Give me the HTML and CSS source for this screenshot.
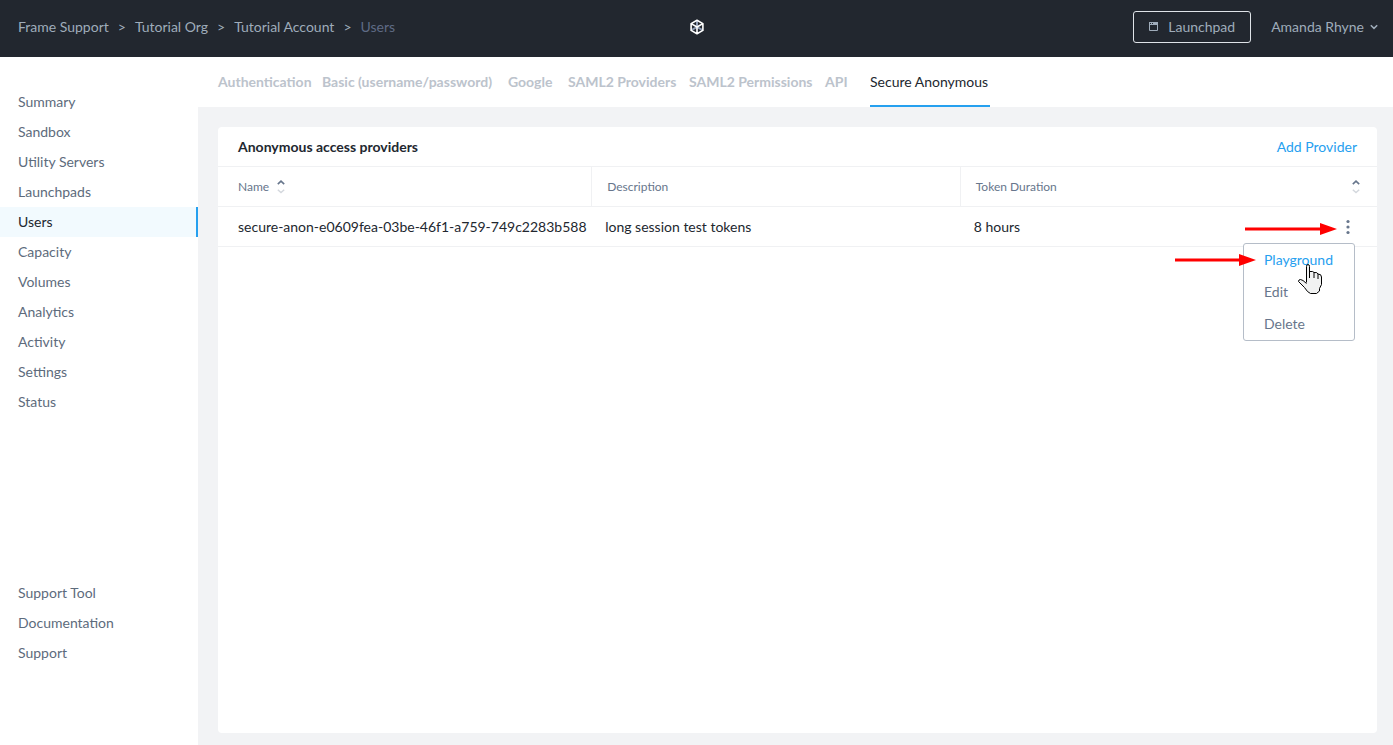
FILE: index.html
```html
<!DOCTYPE html>
<html lang="en">
<head>
<meta charset="utf-8">
<title>Users - Secure Anonymous</title>
<link rel="stylesheet" href="styles.css">
</head>
<body>
<header class="topbar">
  <nav class="crumbs" aria-label="Breadcrumb">
    <a href="#">Frame Support</a><span>&gt;</span>
    <a href="#">Tutorial Org</a><span>&gt;</span>
    <a href="#">Tutorial Account</a><span>&gt;</span>
    <span class="crumb-current" aria-current="page">Users</span>
  </nav>
  <svg class="logo" viewBox="0 0 16 16" width="16" height="16" aria-hidden="true">
    <path d="M8 8V1.5M8 8l-5.5 3.2M8 8l5.5 3.2" stroke="#8e9bb3" stroke-width="2" fill="none"/>
    <path d="M8 1.2 13.9 4.6V11.4L8 14.8 2.1 11.4V4.6ZM2.1 4.6 8 8l5.9-3.4M8 8v6.8" stroke="#fff" stroke-width="1.6" stroke-linejoin="round" fill="none"/>
  </svg>
  <div class="account">
    <button class="launchpad" type="button">
      <svg viewBox="0 0 10 10" width="10" height="10" aria-hidden="true"><path d="M.5.5h8v8h-8z" fill="none" stroke="#9facba"/><path d="M0 0h9v3H0z" fill="#9facba"/><path d="M1 1h1v1H1zM3 1h1v1H3z" fill="#22272f"/></svg>
      Launchpad
    </button>
    <button class="user" type="button">Amanda Rhyne
      <svg viewBox="0 0 8 6" width="8" height="6" aria-hidden="true"><path d="M.8 1.2 4 4.4 7.2 1.2" fill="none" stroke="#9facba" stroke-width="1.5"/></svg>
    </button>
  </div>
</header>
<div class="shell">
  <aside class="sidebar">
    <nav class="side-nav" aria-label="Account">
      <a href="#">Summary</a>
      <a href="#">Sandbox</a>
      <a href="#">Utility Servers</a>
      <a href="#">Launchpads</a>
      <a href="#" class="active" aria-current="page">Users</a>
      <a href="#">Capacity</a>
      <a href="#">Volumes</a>
      <a href="#">Analytics</a>
      <a href="#">Activity</a>
      <a href="#">Settings</a>
      <a href="#">Status</a>
    </nav>
    <nav class="side-nav" aria-label="Help">
      <a href="#">Support Tool</a>
      <a href="#">Documentation</a>
      <a href="#">Support</a>
    </nav>
  </aside>
  <main class="main">
    <nav class="tabs" aria-label="User settings">
      <a href="#">Authentication</a>
      <a href="#">Basic (username/password)</a>
      <a href="#">Google</a>
      <a href="#">SAML2 Providers</a>
      <a href="#">SAML2 Permissions</a>
      <a href="#">API</a>
      <a href="#" class="active" aria-current="page">Secure Anonymous</a>
    </nav>
    <section class="card">
      <div class="card-head">
        <h1>Anonymous access providers</h1>
        <button class="add" type="button">Add Provider</button>
      </div>
      <table class="providers">
        <thead>
          <tr>
            <th scope="col"><div class="cell">Name
              <svg class="sort" viewBox="0 0 8 14" width="8" height="14" aria-hidden="true"><path d="M.8 4.2 4 1.2 7.2 4.2" fill="none" stroke="#67768c" stroke-width="1.6"/><path d="M.8 9.8 4 12.6 7.2 9.8" fill="none" stroke="#d3d7dd" stroke-width="1.4"/></svg></div></th>
            <th scope="col">Description</th>
            <th scope="col"><div class="cell spread">Token Duration
              <svg class="sort" viewBox="0 0 8 14" width="8" height="14" aria-hidden="true"><path d="M.8 4.2 4 1.2 7.2 4.2" fill="none" stroke="#67768c" stroke-width="1.6"/><path d="M.8 9.8 4 12.6 7.2 9.8" fill="none" stroke="#d3d7dd" stroke-width="1.4"/></svg></div></th>
          </tr>
        </thead>
        <tbody>
          <tr>
            <td>secure-anon-e0609fea-03be-46f1-a759-749c2283b588</td>
            <td>long session test tokens</td>
            <td><div class="cell spread">8 hours
              <div class="actions">
                <button class="kebab" type="button" aria-label="Provider actions" aria-expanded="true">
                  <svg viewBox="0 0 4 16" width="4" height="16" aria-hidden="true"><circle cx="2" cy="2.5" r="1.6"/><circle cx="2" cy="8" r="1.6"/><circle cx="2" cy="13.5" r="1.6"/></svg>
                </button>
                <div class="menu">
                  <button class="hovered" type="button">Playground</button>
                  <button type="button">Edit</button>
                  <button type="button">Delete</button>
                </div>
                <svg class="arrow arrow-kebab" viewBox="0 0 92 12" width="92" height="12" aria-hidden="true"><path d="M0 4.500h75V0l17 6-17 6V7.500H0z"/></svg>
                <svg class="arrow arrow-menu" viewBox="0 0 81 12" width="81" height="12" aria-hidden="true"><path d="M0 4.500h64V0l17 6-17 6V7.500H0z"/></svg>
                <svg class="pointer" viewBox="0 0 26 32" width="26" height="32" aria-hidden="true"><path d="M9.500 19.500V3.500Q9.500 1.500 11 1.500T12.500 3.500V8.500Q16.500 8 17 9.500 20.500 9 21 11 24.500 11 24.500 14V21.500L22.500 25.500V28L19.500 30.500H13.500L10.500 28.500 7.500 24.500 1.500 18.500Q1.500 16.500 3.500 16.500T9.500 20.500" fill="#f1f2f2" stroke="#000"/><path d="M12.500 8v7M17 9.500V15M21 11v5" fill="none" stroke="#000"/></svg>
              </div></div></td>
          </tr>
        </tbody>
      </table>
    </section>
  </main>
</div>
</body>
</html>
```
FILE: styles.css
```css
* {
  box-sizing: border-box;
}

body {
  margin: 0;
  min-height: 100vh;
  display: flex;
  flex-direction: column;
  background: #f2f3f5;
  color: #22272f;
  font: 14px/20px Lato, "Open Sans", sans-serif;
}

a {
  color: inherit;
  text-decoration: none;
}

button {
  padding: 0;
  border: 0;
  background: none;
  color: inherit;
  font: inherit;
  cursor: pointer;
}

svg {
  display: block;
  flex: none;
}

.topbar {
  display: grid;
  grid-template-columns: 1fr auto 1fr;
  align-items: center;
  padding: 11px 15px 14px;
  background: #22272f;
  color: #9facba;
}

.crumbs {
  display: flex;
  gap: 9px;
  padding-left: 3px;
}

.crumb-current {
  color: #5f6b85;
}

.account {
  display: flex;
  justify-content: flex-end;
  align-items: center;
  gap: 20px;
}

.launchpad {
  display: flex;
  align-items: center;
  gap: 9px;
  padding: 5px 15px;
  border: 1px solid #dfe3e8;
  border-radius: 3px;
}

.user {
  display: flex;
  align-items: center;
  gap: 6px;
}

.shell {
  flex: 1;
  display: flex;
}

.sidebar {
  width: 198px;
  flex: none;
  display: flex;
  flex-direction: column;
  justify-content: space-between;
  padding: 30px 0 77px;
  background: #fff;
  color: #5d6b7c;
}

.side-nav {
  display: flex;
  flex-direction: column;
}

.side-nav a {
  padding: 5px 18px;
}

.side-nav .active {
  background: #f2fafe;
  border-right: 2px solid #26a0ef;
  color: #22272f;
}

.main {
  flex: 1;
  display: flex;
  flex-direction: column;
}

.tabs {
  display: grid;
  grid-template-columns: 89px 171px 45px 106px 121px 30px 120px;
  gap: 15px;
  padding-left: 20px;
  background: #fff;
  color: #bcc3cc;
  font-weight: 700;
  white-space: nowrap;
}

.tabs a {
  padding: 15px 0 13px;
  border-bottom: 2px solid transparent;
}

.tabs .active {
  border-color: #26a0ef;
  color: #22272f;
  font-weight: 400;
}

.card {
  flex: 1;
  margin: 20px 16px 12px 20px;
  border-radius: 4px;
  background: #fff;
}

.card-head {
  display: flex;
  justify-content: space-between;
  padding: 10px 20px 9px;
}

h1 {
  margin: 0;
  font: inherit;
  font-weight: 700;
}

.add {
  color: #26a0ef;
}

.providers {
  width: 100%;
  table-layout: fixed;
  border-collapse: separate;
  border-spacing: 0;
  text-align: left;
}

.providers th,
.providers td {
  height: 40px;
  padding: 0 15px;
  border-bottom: 1px solid #f0f1f3;
  white-space: nowrap;
}

.providers th {
  height: 41px;
  border-top: 1px solid #f0f1f3;
  color: #67768c;
  font-size: 12px;
  font-weight: 400;
}

.providers th + th {
  border-left: 1px solid #f0f1f3;
}

.providers td {
  padding-left: 14px;
}

.providers th:first-child,
.providers td:first-child {
  width: 32.2%;
  padding-left: 20px;
  padding-right: 0;
}

.providers th:nth-child(2) {
  width: 31.8%;
}

.cell {
  display: flex;
  align-items: center;
  gap: 8px;
}

.spread {
  justify-content: space-between;
}

.providers th:last-child {
  padding-right: 17px;
}

.providers td:last-child {
  padding-right: 22px;
}

.actions {
  position: relative;
}

.kebab {
  display: block;
  padding: 0 5px;
  fill: #67768c;
}

.menu {
  position: absolute;
  top: 24px;
  right: 0;
  width: 112px;
  display: flex;
  flex-direction: column;
  border: 1px solid #b5bdc8;
  border-radius: 3px;
  background: #fff;
  color: #67768c;
}

.menu button {
  padding: 6px 20px;
  text-align: left;
}

.menu .hovered {
  color: #26a0ef;
}

.arrow {
  position: absolute;
  fill: #f00;
}

.arrow-kebab {
  top: 4px;
  right: 18px;
}

.arrow-menu {
  top: 35px;
  right: 99px;
}

.pointer {
  position: absolute;
  top: 44px;
  right: 32px;
}
```
